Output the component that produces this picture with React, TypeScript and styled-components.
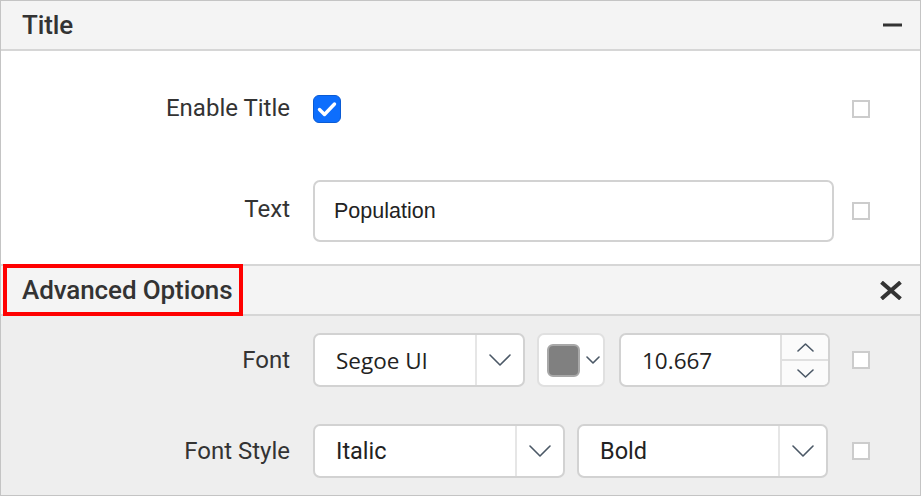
import * as React from "react";
import styled, { createGlobalStyle } from "styled-components";

const GlobalStyle = createGlobalStyle`
  html, body {
    margin: 0;
    padding: 0;
    background: #ffffff;
  }
  * {
    box-sizing: border-box;
  }
`;

const Panel = styled.div`
  width: 921px;
  height: 496px;
  border: 1px solid #c4c4c4;
  display: flex;
  flex-direction: column;
  font-family: Roboto, "Noto Sans", sans-serif;
  color: #333333;
  overflow: hidden;
`;

const SectionHeader = styled.div<{ $top?: boolean }>`
  flex: none;
  height: ${({ $top }) => ($top ? "50px" : "52px")};
  display: flex;
  align-items: center;
  justify-content: space-between;
  background: #f4f4f4;
  border-top: ${({ $top }) => ($top ? "none" : "2px solid #d6d6d6")};
  border-bottom: 2px solid #d6d6d6;
  padding: 0 18px 0 21px;
`;

const HeaderTitle = styled.span`
  font-size: 26px;
  font-weight: 500;
  color: #333333;
  letter-spacing: -0.1px;
`;

const Highlight = styled.div`
  height: 52px;
  margin: -2px 0 -2px -19px;
  padding: 0 6px 0 15px;
  border: 4px solid #ff0000;
  display: flex;
  align-items: center;
`;

const IconButton = styled.span`
  display: flex;
  align-items: center;
  color: #333333;
`;

const Body = styled.div<{ $shaded?: boolean }>`
  flex: ${({ $shaded }) => ($shaded ? "1" : "none")};
  background: ${({ $shaded }) => ($shaded ? "#eeeeee" : "#ffffff")};
  padding: ${({ $shaded }) => ($shaded ? "17px 0 0" : "27px 0 22px")};
  display: flex;
  flex-direction: column;
  gap: ${({ $shaded }) => ($shaded ? "37px" : "40px")};
`;

const Row = styled.div<{ $height: number }>`
  height: ${({ $height }) => $height}px;
  display: flex;
  align-items: center;
`;

const Label = styled.div<{ $shift: number }>`
  width: 289px;
  text-align: right;
  font-size: 24px;
  color: #333333;
  margin-top: ${({ $shift }) => $shift}px;
`;

const Controls = styled.div`
  width: 521px;
  margin-left: 23px;
  height: 100%;
  display: flex;
  align-items: center;
  gap: 12px;
`;

const SideCheck = styled.span`
  width: 18px;
  height: 18px;
  margin-left: 18px;
  border: 2px solid #cccccc;
  background: #ffffff;
  flex: none;
`;

const BlueCheck = styled.span`
  width: 28px;
  height: 28px;
  border-radius: 6px;
  background: #0d6efd;
  border: 1px solid #0a5bd4;
  display: flex;
  align-items: center;
  justify-content: center;
`;

const TextBox = styled.div`
  width: 521px;
  height: 62px;
  border: 2px solid #d2d2d2;
  border-radius: 7px;
  background: #ffffff;
  display: flex;
  align-items: center;
  padding-left: 19px;
  font-family: "Liberation Sans", Arial, sans-serif;
  font-size: 21.5px;
  color: #222222;
`;

const Field = styled.div<{ $width: number }>`
  width: ${({ $width }) => $width}px;
  height: 100%;
  flex: none;
  border: 2px solid #d2d2d2;
  border-radius: 7px;
  background: #ffffff;
  display: flex;
  overflow: hidden;
`;

const FieldValue = styled.div<{ $segoe?: boolean }>`
  flex: 1;
  display: flex;
  align-items: center;
  padding-left: 21px;
  font-family: ${({ $segoe }) =>
    $segoe ? '"Open Sans", "Noto Sans", sans-serif' : 'Roboto, "Noto Sans", sans-serif'};
  font-size: ${({ $segoe }) => ($segoe ? "22.5px" : "23.5px")};
  color: #222222;
`;

const DropButton = styled.div`
  width: 48px;
  flex: none;
  border-left: 2px solid #e6e6e6;
  display: flex;
  align-items: center;
  justify-content: center;
`;

const Spinner = styled.div`
  width: 48px;
  flex: none;
  border-left: 2px solid #e0e0e0;
  display: flex;
  flex-direction: column;
  background: #fbfbfb;
`;

const SpinHalf = styled.div<{ $top?: boolean }>`
  flex: 1;
  display: flex;
  align-items: center;
  justify-content: center;
  border-bottom: ${({ $top }) => ($top ? "2px solid #e0e0e0" : "none")};
`;

const ColorPicker = styled.div`
  width: 68px;
  height: 100%;
  flex: none;
  margin-right: 2px;
  border: 2px solid #e0e0e0;
  border-radius: 7px;
  background: #ffffff;
  display: flex;
  align-items: center;
  padding-left: 8px;
  gap: 6px;
`;

const Swatch = styled.span`
  width: 33px;
  height: 33px;
  border-radius: 6px;
  background: #808080;
  border: 2px solid #a8a8a8;
`;

const Chevron = ({ w, h, up }: { w: number; h: number; up?: boolean }) => (
  <svg width={w} height={h} viewBox={`0 0 ${w} ${h}`} fill="none">
    <path
      d={up ? `M1 ${h - 1} L${w / 2} 1 L${w - 1} ${h - 1}` : `M1 1 L${w / 2} ${h - 1} L${w - 1} 1`}
      stroke="#4b5866"
      strokeWidth={1.6}
      strokeLinecap="round"
      strokeLinejoin="round"
    />
  </svg>
);

const Select = ({ width, value, segoe }: { width: number; value: string; segoe?: boolean }) => (
  <Field $width={width}>
    <FieldValue $segoe={segoe}>{value}</FieldValue>
    <DropButton>
      <Chevron w={22} h={12} />
    </DropButton>
  </Field>
);

export default function App() {
  return (
    <>
      <GlobalStyle />
      <Panel>
        <SectionHeader $top>
          <HeaderTitle>Title</HeaderTitle>
          <IconButton>
            <svg width="19" height="4" viewBox="0 0 19 4">
              <rect x="0" y="0.5" width="19" height="3" fill="#333333" />
            </svg>
          </IconButton>
        </SectionHeader>
        <Body>
          <Row $height={62}>
            <Label $shift={-3}>Enable Title</Label>
            <Controls>
              <BlueCheck>
                <svg width="20" height="16" viewBox="0 0 20 16" fill="none">
                  <path
                    d="M2.5 8.5 L7.5 13.5 L17.5 3"
                    stroke="#ffffff"
                    strokeWidth="3.4"
                    strokeLinecap="round"
                    strokeLinejoin="round"
                  />
                </svg>
              </BlueCheck>
            </Controls>
            <SideCheck />
          </Row>
          <Row $height={62}>
            <Label $shift={-4}>Text</Label>
            <Controls>
              <TextBox>Population</TextBox>
            </Controls>
            <SideCheck />
          </Row>
        </Body>
        <SectionHeader>
          <Highlight>
            <HeaderTitle>Advanced Options</HeaderTitle>
          </Highlight>
          <IconButton>
            <svg width="22" height="19" viewBox="0 0 22 19" fill="none">
              <path
                d="M3 2.5 L19 16.5 M19 2.5 L3 16.5"
                stroke="#333333"
                strokeWidth="4"
                strokeLinecap="square"
              />
            </svg>
          </IconButton>
        </SectionHeader>
        <Body $shaded>
          <Row $height={54}>
            <Label $shift={0}>Font</Label>
            <Controls>
              <Select width={212} value="Segoe UI" segoe />
              <ColorPicker>
                <Swatch />
                <Chevron w={14} h={8} />
              </ColorPicker>
              <Field $width={211}>
                <FieldValue $segoe>10.667</FieldValue>
                <Spinner>
                  <SpinHalf $top>
                    <Chevron w={17} h={9} up />
                  </SpinHalf>
                  <SpinHalf>
                    <Chevron w={17} h={9} />
                  </SpinHalf>
                </Spinner>
              </Field>
            </Controls>
            <SideCheck />
          </Row>
          <Row $height={54}>
            <Label $shift={0}>Font Style</Label>
            <Controls>
              <Select width={252} value="Italic" />
              <Select width={251} value="Bold" />
            </Controls>
            <SideCheck />
          </Row>
        </Body>
      </Panel>
    </>
  );
}
